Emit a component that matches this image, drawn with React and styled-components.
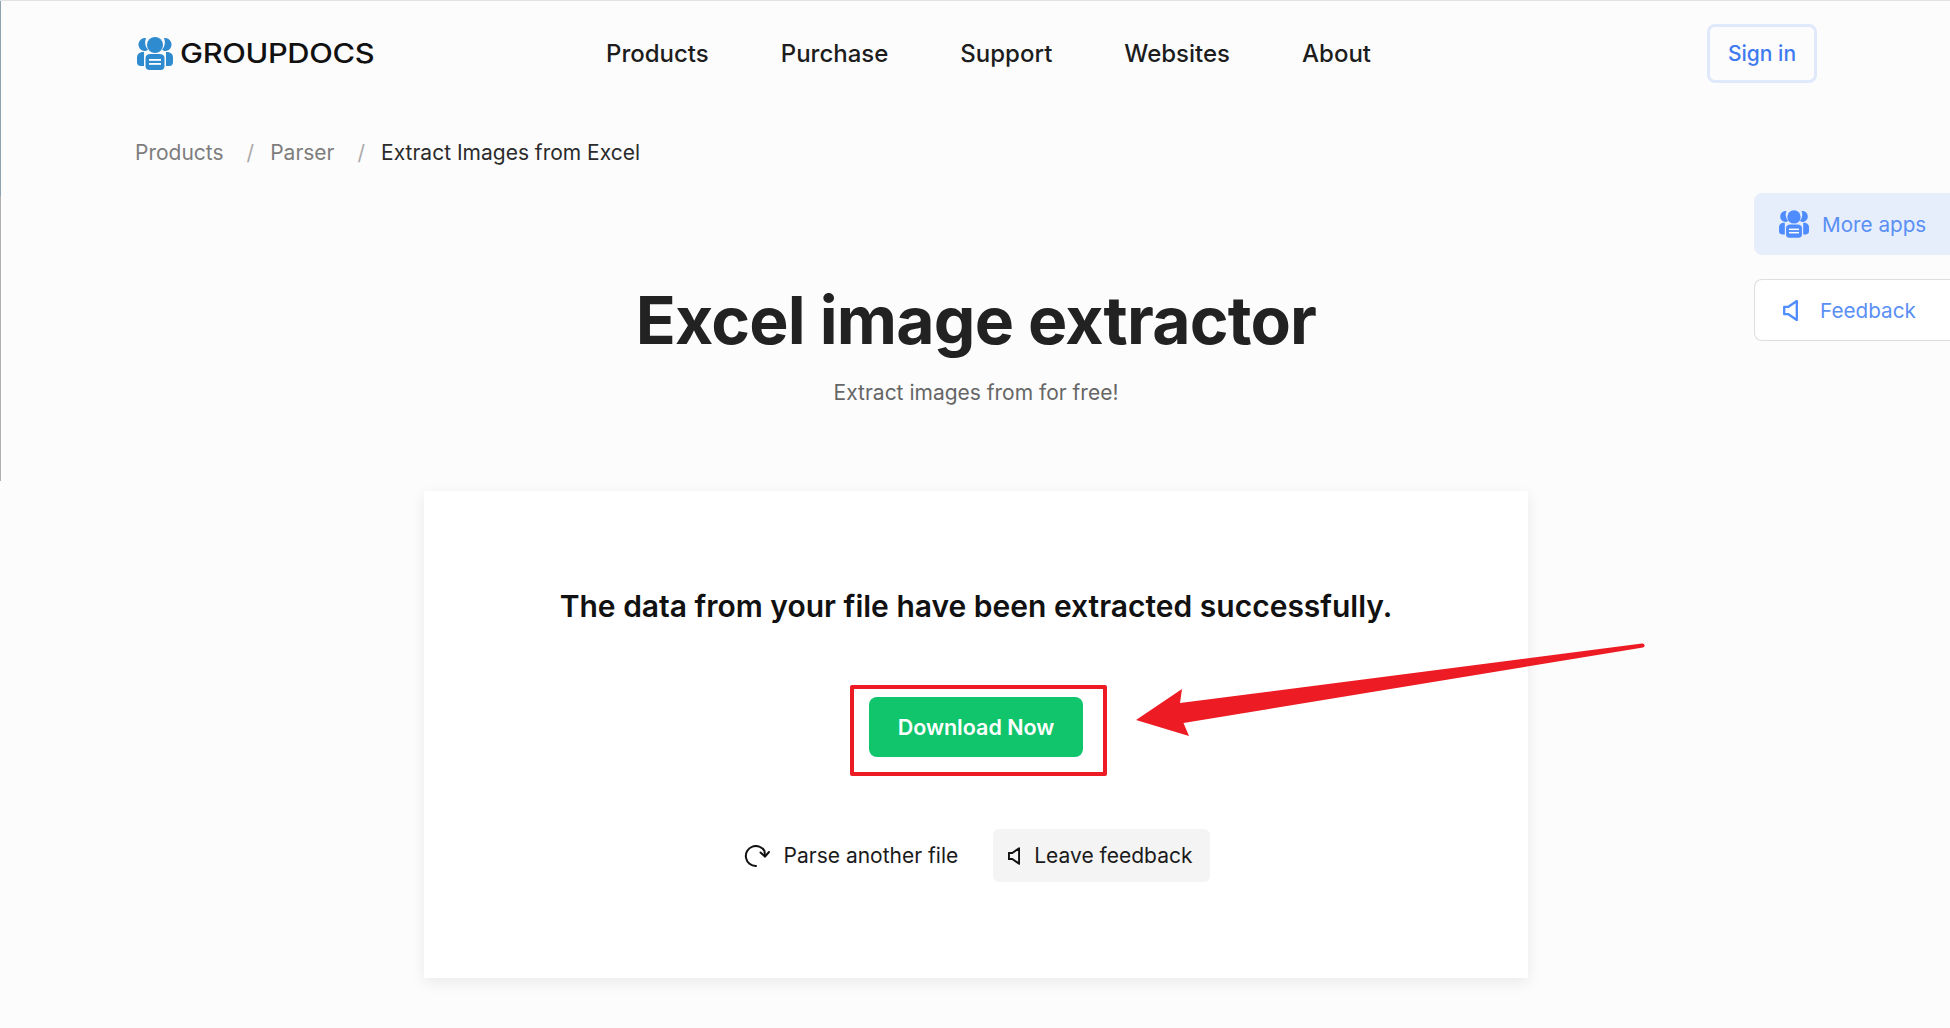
import React from "react";
import styled, { createGlobalStyle } from "styled-components";

const GlobalStyle = createGlobalStyle`
  html, body {
    margin: 0;
    padding: 0;
    background: #fcfcfc;
  }
  body {
    font-family: Inter, "Liberation Sans", sans-serif;
    color: #222;
  }
`;

const Page = styled.div`
  position: relative;
  box-sizing: border-box;
  height: 1028px;
  overflow: hidden;
  border-top: 1px solid #e2e2e2;
  background: linear-gradient(#8ea3ae 0 195px, #b0b0b0 195px 480px, #fcfcfc 480px) left top / 1px 100% no-repeat, #fcfcfc;
`;

const Container = styled.div`
  width: 1682px;
  margin-left: 135px;
`;

const Header = styled.header`
  display: flex;
  align-items: center;
  height: 59px;
  margin-top: 23px;
`;

const LogoLink = styled.a`
  display: flex;
  align-items: center;
  gap: 7px;
  width: 239px;
  padding-left: 2px;
  box-sizing: border-box;
`;

const LogoText = styled.span`
  display: inline-block;
  font-size: 27px;
  font-weight: 500;
  letter-spacing: -0.3px;
  color: #111;
  white-space: nowrap;
  transform: scaleX(1.14);
  transform-origin: left center;
`;

const Nav = styled.nav`
  display: flex;
  gap: 72px;
  margin-left: 232px;
  margin-top: -1px;
`;

const NavItem = styled.a`
  font-size: 24px;
  font-weight: 500;
  color: #1d1d1d;
`;

const SignIn = styled.button`
  margin-left: auto;
  width: 110px;
  height: 59px;
  border: 3px solid #dfe9fb;
  border-radius: 8px;
  background: transparent;
  font: 500 21px Inter, sans-serif;
  color: #3f7af0;
`;

const Breadcrumbs = styled.ol`
  display: flex;
  gap: 23px;
  list-style: none;
  margin: 58px 0 0;
  padding: 0;
  font-size: 21px;
  line-height: 24px;
  color: #7d7d7d;
`;

const Crumb = styled.li`
  color: ${(p) => (p.$active ? "#2b2b2b" : "#7d7d7d")};
  &::before {
    content: ${(p) => (p.$first ? "none" : '"/"')};
    margin-right: 16px;
    color: #aaa;
  }
`;

const Title = styled.h1`
  margin: 117px 0 0;
  text-align: center;
  font-size: 66px;
  line-height: 76px;
  font-weight: 700;
  letter-spacing: -0.8px;
  color: #222;
`;

const Subtitle = styled.p`
  margin: 23px 0 0;
  text-align: center;
  font-size: 21px;
  line-height: 24px;
  color: #666;
`;

const Card = styled.section`
  display: flex;
  flex-direction: column;
  align-items: center;
  box-sizing: border-box;
  width: 1104px;
  height: 487px;
  margin: 86px auto 0;
  padding-top: 95px;
  background: #fff;
  box-shadow: 0 4px 14px rgba(0, 0, 0, 0.08);
`;

const CardTitle = styled.h2`
  margin: 0;
  font-size: 30px;
  line-height: 40px;
  font-weight: 600;
  color: #111;
`;

const DownloadFrame = styled.div`
  margin: 59px 0 0 5px;
  padding: 8px 20px 15px 15px;
  border: 4px solid #ed1c24;
  border-radius: 2px;
`;

const DownloadButton = styled.button`
  display: block;
  width: 214px;
  height: 60px;
  border: 0;
  border-radius: 8px;
  background: #10c56c;
  color: #fff;
  font: 600 21.500px Inter, sans-serif;
`;

const Actions = styled.div`
  display: flex;
  align-items: center;
  gap: 35px;
  margin: 53px 0 0 2px;
`;

const Action = styled.a`
  display: flex;
  align-items: center;
  gap: 14px;
  box-sizing: border-box;
  height: 53px;
  padding: 0 ${(p) => (p.$filled ? "18px" : "0")} 0 ${(p) => (p.$filled ? "15px" : "0")};
  border-radius: 6px;
  background: ${(p) => (p.$filled ? "#f4f4f4" : "transparent")};
  font-size: 21px;
  color: #1a1a1a;
  white-space: nowrap;
`;

const SideDock = styled.aside`
  position: absolute;
  top: 192px;
  right: 0;
  display: flex;
  flex-direction: column;
  gap: 24px;
`;

const SideButton = styled.a`
  display: flex;
  align-items: center;
  gap: ${(p) => (p.$filled ? "13px" : "22px")};
  box-sizing: border-box;
  width: 196px;
  height: 62px;
  padding-left: ${(p) => (p.$filled ? "24px" : "28px")};
  border-radius: 8px 0 0 8px;
  border: 1px solid ${(p) => (p.$filled ? "#e7eefb" : "#dedede")};
  border-right: 0;
  background: ${(p) => (p.$filled ? "#e7eefb" : "#fff")};
  font-size: 20.700px;
  color: #5a8ff5;
`;

const Annotation = styled.svg`
  position: absolute;
  top: -1px;
  left: 0;
  pointer-events: none;
`;

const GroupIcon = ({ color, width, height }) => (
  <svg width={width} height={height} viewBox="0 0 36 33">
    <circle cx="18" cy="8" r="8" fill={color} />
    <path d="M9 1A6.500 6.500 0 0 0 7 14c1.600 0 3-.4 4-1.200A11.500 11.500 0 0 1 9 1Z" fill={color} />
    <path d="M27 1A6.500 6.500 0 0 1 29 14c-1.600 0-3-.4-4-1.200A11.500 11.500 0 0 0 27 1Z" fill={color} />
    <path d="M6 15h1v14H3.500C1.400 29 0 27.500 0 25v-4.500C0 17.300 2.500 15 6 15Z" fill={color} />
    <path d="M30 15h-1v14h3.500c2.100 0 3.500-1.500 3.500-4v-4.500c0-3.200-2.500-5.500-6-5.500Z" fill={color} />
    <path d="M13.500 17h9c3 0 5 1.500 5 4v8c0 2.500-1.500 4-4 4H12.500c-2.500 0-4-1.500-4-4v-8c0-2.500 2-4 5-4Z" fill={color} />
    <rect x="12" y="22" width="12" height="1.800" fill="#fff" />
    <rect x="12" y="26" width="12" height="1.800" fill="#fff" />
  </svg>
);

const SpeakerIcon = ({ color, width, height, strokeWidth }) => (
  <svg width={width} height={height} viewBox="0 0 14 20" fill="none">
    <path d="M1 6.500h4L13 1v18l-8-5.500H1Z" stroke={color} strokeWidth={strokeWidth} strokeLinejoin="round" />
  </svg>
);

const ReloadIcon = () => (
  <svg width="26" height="22" viewBox="0 0 26 22" fill="none" stroke="#111" strokeWidth="2" strokeLinecap="round">
    <path d="M12 21A10 10 0 1 1 20.500 6L21 11" />
    <path d="M16.500 7.500 21 11.500l4-4.500" />
  </svg>
);

export default function App() {
  return (
    <Page>
      <GlobalStyle />
      <Container>
        <Header>
          <LogoLink>
            <GroupIcon color="#2e8bd0" width={36} height={33} />
            <LogoText>GROUPDOCS</LogoText>
          </LogoLink>
          <Nav>
            <NavItem>Products</NavItem>
            <NavItem>Purchase</NavItem>
            <NavItem>Support</NavItem>
            <NavItem>Websites</NavItem>
            <NavItem>About</NavItem>
          </Nav>
          <SignIn>Sign in</SignIn>
        </Header>
        <Breadcrumbs>
          <Crumb $first>Products</Crumb>
          <Crumb>Parser</Crumb>
          <Crumb $active>Extract Images from Excel</Crumb>
        </Breadcrumbs>
        <Title>Excel image extractor</Title>
        <Subtitle>Extract images from for free!</Subtitle>
        <Card>
          <CardTitle>The data from your file have been extracted successfully.</CardTitle>
          <DownloadFrame>
            <DownloadButton>Download Now</DownloadButton>
          </DownloadFrame>
          <Actions>
            <Action>
              <ReloadIcon />
              Parse another file
            </Action>
            <Action $filled>
              <SpeakerIcon color="#111" width={12} height={18} strokeWidth={2.4} />
              Leave feedback
            </Action>
          </Actions>
        </Card>
      </Container>
      <SideDock>
        <SideButton $filled>
          <GroupIcon color="#4f8cff" width={30} height={28} />
          More apps
        </SideButton>
        <SideButton>
          <SpeakerIcon color="#4f8cff" width={15} height={21} strokeWidth={2.2} />
          Feedback
        </SideButton>
      </SideDock>
      <Annotation width="1950" height="1028" viewBox="0 0 1950 1028">
        <path
          d="M1642 643.500a2 2 0 0 1 1 4L1183.500 723 1189 736 1136 720 1182 689 1180 703Z"
          fill="#ed1c24"
        />
      </Annotation>
    </Page>
  );
}
